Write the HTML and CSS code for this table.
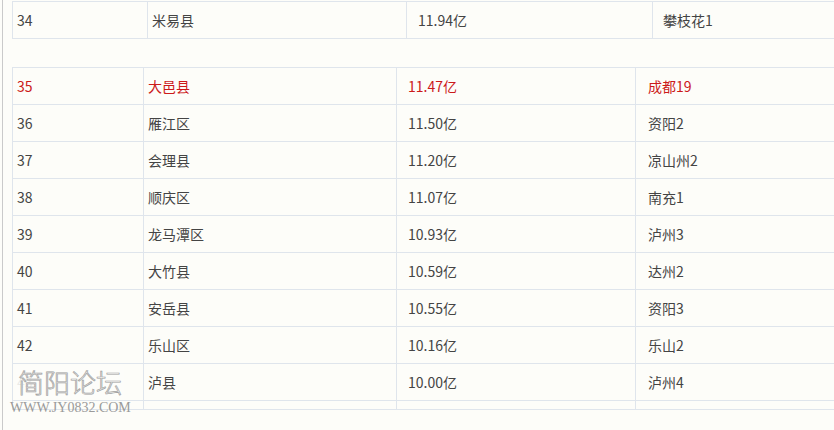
FILE: index.html
```html
<!DOCTYPE html>
<html lang="zh-CN">
<head>
<meta charset="utf-8">
<link rel="stylesheet" href="styles.css">
</head>
<body>
<div class="page">
  <div class="content">
    <div class="tbl tbl-a">
      <div class="c c1">34</div><div class="c c2">米易县</div><div class="c c3">11.94亿</div><div class="c c4">攀枝花1</div>
    </div>
    <div class="tbl tbl-b">
      <div class="c c1 red">35</div><div class="c c2 red">大邑县</div><div class="c c3 red">11.47亿</div><div class="c c4 red">成都19</div>
      <div class="c c1">36</div><div class="c c2">雁江区</div><div class="c c3">11.50亿</div><div class="c c4">资阳2</div>
      <div class="c c1">37</div><div class="c c2">会理县</div><div class="c c3">11.20亿</div><div class="c c4">凉山州2</div>
      <div class="c c1">38</div><div class="c c2">顺庆区</div><div class="c c3">11.07亿</div><div class="c c4">南充1</div>
      <div class="c c1">39</div><div class="c c2">龙马潭区</div><div class="c c3">10.93亿</div><div class="c c4">泸州3</div>
      <div class="c c1">40</div><div class="c c2">大竹县</div><div class="c c3">10.59亿</div><div class="c c4">达州2</div>
      <div class="c c1">41</div><div class="c c2">安岳县</div><div class="c c3">10.55亿</div><div class="c c4">资阳3</div>
      <div class="c c1">42</div><div class="c c2">乐山区</div><div class="c c3">10.16亿</div><div class="c c4">乐山2</div>
      <div class="c c1">43</div><div class="c c2">泸县</div><div class="c c3">10.00亿</div><div class="c c4">泸州4</div>
      <div class="c c1 thin"></div><div class="c c2 thin"></div><div class="c c3 thin"></div><div class="c c4 thin"></div>
    </div>
  </div>
  <div class="watermark">
    <div class="wm-cn">简阳论坛</div>
    <div class="wm-en">WWW.JY0832.COM</div>
  </div>
</div>
</body>
</html>
```

FILE: styles.css
```css
html, body {
  margin: 0;
  padding: 0;
  background: #fdfdf9;
}
body {
  width: 834px;
  height: 430px;
  overflow: hidden;
  font-family: "Noto Sans CJK SC", "Noto Sans", sans-serif;
  font-size: 14px;
  color: #444444;
}
.page {
  position: relative;
  height: 430px;
  margin-left: 2px;
  border-left: 1px solid #cacaca;
  overflow: hidden;
}
.content {
  padding-left: 9px;
  padding-top: 1px;
}
.tbl {
  display: grid;
  width: 1000px;
  border-top: 1px solid #dfe5ec;
  border-left: 1px solid #dfe5ec;
}
.tbl-a {
  grid-template-columns: 135px 259px 246px 360px;
}
.tbl-b {
  margin-top: 28px;
  grid-template-columns: 131px 253px 239px 377px;
}
.c {
  box-sizing: border-box;
  height: 37px;
  line-height: 36px;
  border-right: 1px solid #dfe5ec;
  border-bottom: 1px solid #dfe5ec;
  white-space: nowrap;
}
.c.thin {
  height: 9px;
}
.c1, .c2 {
  padding-left: 4px;
}
.c3 {
  padding-left: 11px;
}
.tbl-a .c4 {
  padding-left: 10px;
}
.tbl-b .c4 {
  padding-left: 12px;
}
.red {
  color: #cc1a1a;
}
.watermark {
  position: absolute;
  left: 7px;
  top: 366px;
  pointer-events: none;
}
.wm-cn {
  display: inline-block;
  font-family: "Noto Sans CJK SC", sans-serif;
  font-weight: 200;
  font-size: 26px;
  line-height: 32px;
  color: #f6f6f4;
  -webkit-text-stroke: 0.7px #a0a0a0;
  margin-left: 6px;
  padding: 0 2px;
  background: rgba(253, 253, 249, 0.9);
}
.wm-en {
  font-family: "Liberation Serif", serif;
  font-size: 14px;
  line-height: 16px;
  color: #9a9a9a;
  margin-top: 2px;
}
```
